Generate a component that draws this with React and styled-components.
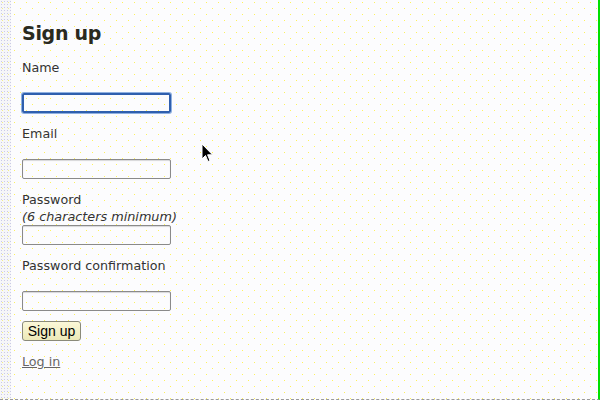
import React from "react";
import styled, { createGlobalStyle } from "styled-components";

const Global = createGlobalStyle`
  html, body { margin: 0; padding: 0; }
  body { font-family: "DejaVu Sans", Verdana, sans-serif; color: #333; }
`;

const dot = (c) => `conic-gradient(at 1px 1px, rgba(255,255,255,0) 75%, ${c} 0)`;

const Page = styled.div`
  position: relative;
  width: 598px;
  height: 399px;
  border-right: 2px solid #00e000;
  border-bottom: 1px dashed #999;
  background-color: #fcfcfe;
  background-image: ${dot("#fff25c")}, ${dot("#fff25c")};
  background-size: 12px 12px;
  background-position: 2px 2px, 8px 8px;
  overflow: hidden;
  box-sizing: content-box;
`;

const LeftStrip = styled.div`
  position: absolute;
  left: 0;
  top: 0;
  bottom: 0;
  width: 11px;
  background-color: #f6f6f8;
  background-image: ${dot("#cacae6")}, ${dot("#f4ee88")};
  background-size: 3px 3px, 6px 6px;
  background-position: 1px 1px, 2px 2px;
  pointer-events: none;
`;

const Form = styled.form`
  display: flex;
  flex-direction: column;
  align-items: flex-start;
  padding: 20px 0 0 22px;
`;

const Title = styled.h1`
  margin: 0 0 12px;
  font-size: 19px;
  letter-spacing: -0.3px;
  line-height: 27px;
  font-weight: bold;
  color: #2a2a1e;
`;

const Field = styled.div`
  display: flex;
  flex-direction: column;
  align-items: flex-start;
  margin-bottom: 12px;
`;

const Label = styled.label`
  font-size: 12.7px;
  line-height: 17px;
  height: 17px;
`;

const Hint = styled.em`
  font-size: 12.8px;
  line-height: 17px;
  height: 17px;
  font-style: italic;
`;

const Input = styled.input`
  box-sizing: border-box;
  width: 149px;
  height: 20px;
  margin: 0;
  padding: 0 3px;
  border: ${(p) => (p.$focused ? "2px solid #2f5fae" : "1px solid #8a8a8a")};
  border-radius: 2px;
  background: transparent;
  outline: none;
  box-shadow: ${(p) => (p.$focused ? "0 0 0 1px #8fb0e0" : "inset 0 1px 1px rgba(0,0,0,0.15)")};
`;

const Button = styled.button`
  box-sizing: border-box;
  margin-top: -2px;
  height: 20px;
  width: 59px;
  padding: 0;
  font-family: "Liberation Sans", Arial, sans-serif;
  font-size: 14px;
  color: #000;
  background: linear-gradient(#fbf8d8, #ece9b8);
  border: 1px solid #8a8a7a;
  border-radius: 3px;
`;

const LogIn = styled.a`
  margin-top: 12px;
  font-size: 12.7px;
  line-height: 17px;
  color: #666;
  text-decoration: underline;
`;

const Cursor = styled.svg`
  position: absolute;
  left: 201px;
  top: 143px;
`;

const fields = [
  { label: "Name", focused: true },
  { label: "Email" },
  { label: "Password", hint: "(6 characters minimum)" },
  { label: "Password confirmation" },
];

export default function App() {
  return (
    <>
      <Global />
      <Page>
        <LeftStrip />
        <Form onSubmit={(e) => e.preventDefault()}>
          <Title>Sign up</Title>
          {fields.map((f) => (
            <Field key={f.label}>
              <Label>{f.label}</Label>
              <Hint>{f.hint || ""}</Hint>
              <Input $focused={f.focused} />
            </Field>
          ))}
          <Button type="submit">Sign up</Button>
          <LogIn href="#">Log in</LogIn>
        </Form>
        <Cursor width="14" height="22" viewBox="0 0 14 22">
          <path d="M1 1 L1 16 L4.5 12.5 L7 18.5 L9 17.6 L6.6 11.8 L11.5 11.8 Z" fill="#000" stroke="#fff" strokeWidth="1" />
        </Cursor>
      </Page>
    </>
  );
}
